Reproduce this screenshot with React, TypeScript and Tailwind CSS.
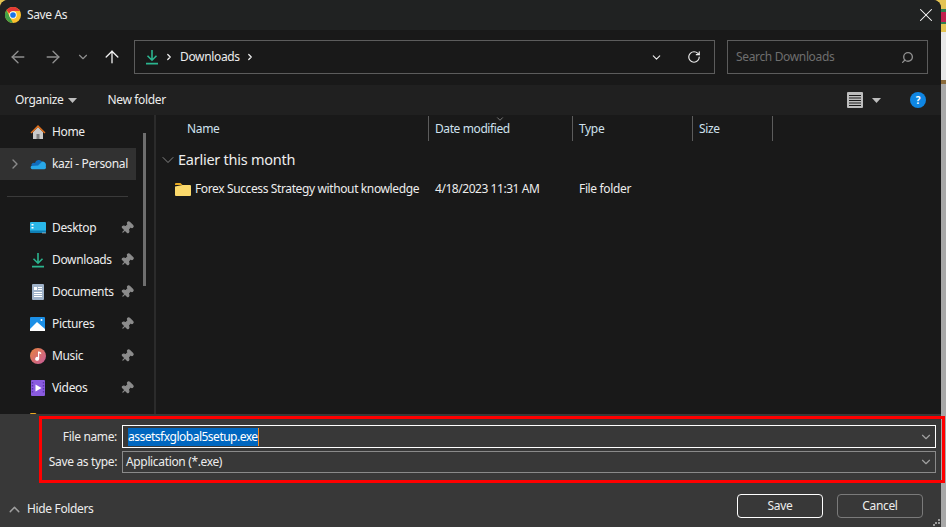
import { ArrowLeft, ArrowRight, ArrowUp, ChevronDown, ChevronRight, ChevronUp, Pin, RotateCw, Search, X } from "lucide-react";

const DownloadIcon = ({ size = 16 }: { size?: number }) => (
  <svg width={size} height={size} viewBox="0 0 16 16" fill="none" stroke="#2bb58f" strokeWidth="1.6">
    <path d="M8 1v10M3.5 6.8 8 11.2l4.500-4.400M2 14.600h12" />
  </svg>
);

const ChromeIcon = () => (
  <svg width="16" height="16" viewBox="0 0 48 48">
    <circle cx="24" cy="24" r="24" fill="#fbc02d" />
    <path d="M24 0a24 24 0 0 1 20.800 12H24a12 12 0 0 0-11.200 7.600L4.600 9.800A24 24 0 0 1 24 0z" fill="#e53935" />
    <path d="M4.600 9.800 14.600 30 24 48A24 24 0 0 1 4.600 9.800z" fill="#43a047" />
    <circle cx="24" cy="24" r="11" fill="#fff" />
    <circle cx="24" cy="24" r="8.500" fill="#1a73e8" />
  </svg>
);

const HomeIcon = () => (
  <svg width="16" height="16" viewBox="0 0 16 16">
    <path d="M3 8v7h10V8L8 3z" fill="#c9c9c9" />
    <path d="M6.500 10h3v5h-3z" fill="#7d7d7d" />
    <path d="M.5 8.500 8 1l7.500 7.500-1 1L8 3.300 1.500 9.500z" fill="#e2711d" />
  </svg>
);

const CloudIcon = () => (
  <svg width="16" height="12" viewBox="0 0 16 11">
    <path d="M5 4.500a4 4 0 0 1 7-1.500l-4 4.500H1.500A2.500 2.500 0 0 1 5 4.500z" fill="#0f6cbd" />
    <path d="M2 10.800a2 2 0 0 1-.8-3.300L8 7l4-4a3.500 3.500 0 0 1 3.800 4.500l.2 1.700a2 2 0 0 1-2 1.600z" fill="#28a8ea" />
  </svg>
);

const DesktopIcon = () => (
  <svg width="16" height="12" viewBox="0 0 16 12">
    <rect width="16" height="10.500" rx="1" fill="#29b6e8" />
    <path d="M0 8.500h16V10a1 1 0 0 1-1 1H1a1 1 0 0 1-1-1z" fill="#0f7fb5" />
    <path d="M1.500 2h2v1.500h-2zM1.500 5h2v1.500h-2zM12.500 10.500h1v1h-1zM14.500 10.500h1v1h-1z" fill="#fff" />
  </svg>
);

const DocumentsIcon = () => (
  <svg width="12" height="16" viewBox="0 0 12 16">
    <rect width="12" height="16" rx="1" fill="#9fb2c9" />
    <path d="M2 3h3v3H2zM6 3h4v1H6zM6 5h4v1H6zM2 8h8v1H2zM2 10h8v1H2zM2 12h8v1H2z" fill="#fff" />
  </svg>
);

const PicturesIcon = () => (
  <svg width="15" height="14" viewBox="0 0 15 14">
    <rect width="15" height="14" rx="1" fill="#1b8fe6" />
    <path d="M0 12 7 5l8 7v2H0z" fill="#fff" />
    <circle cx="11.500" cy="3" r="1" fill="#fff" />
  </svg>
);

const MusicIcon = () => (
  <svg width="16" height="16" viewBox="0 0 16 16">
    <defs>
      <linearGradient id="music-grad" x1="0" y1="0" x2="1" y2="1">
        <stop offset="0" stopColor="#e8843e" />
        <stop offset="1" stopColor="#c65a9c" />
      </linearGradient>
    </defs>
    <circle cx="8" cy="8" r="8" fill="url(#music-grad)" />
    <path d="M8 3.500h1.200v7.300a2 2 0 1 1-1.200-1.800zM9.200 3.500l2 1.300v1.400l-2-1z" fill="#fff" />
  </svg>
);

const VideosIcon = () => (
  <svg width="14" height="16" viewBox="0 0 14 16">
    <rect width="14" height="16" rx="1" fill="#8a5be0" />
    <path d="M4.500 4.500 10.500 8l-6 3.500z" fill="#fff" />
    <path d="M.8 2h1.400v1.400H.8zM.8 5h1.400v1.400H.8zM.8 8h1.400v1.400H.8zM.8 11h1.400v1.400H.8zM11.800 2h1.400v1.400h-1.400zM11.800 5h1.400v1.400h-1.400zM11.800 8h1.400v1.400h-1.400zM11.800 11h1.400v1.400h-1.400z" fill="#5d34ad" />
  </svg>
);

const FolderIcon = ({ size = 16 }: { size?: number }) => (
  <svg width={size} height={size * 0.8125} viewBox="0 0 16 13">
    <path d="M0 1a1 1 0 0 1 1-1h4.500l2 2H0z" fill="#e9a920" />
    <path d="M0 3.500 7.500 2H15a1 1 0 0 1 1 1v9a1 1 0 0 1-1 1H1a1 1 0 0 1-1-1z" fill="#fbd96b" />
  </svg>
);

const ListViewIcon = () => (
  <svg width="16" height="16" viewBox="0 0 16 16">
    <rect width="16" height="16" rx="1" fill="#bdbdbd" />
    <path d="M2 3h12v1H2zM2 5.500h12v1H2zM2 8h12v1H2zM2 10.500h12v1H2zM2 13h12v1H2z" fill="#1a1a1a" />
  </svg>
);

const Caret = () => (
  <svg width="9" height="5" viewBox="0 0 9 5">
    <path d="M0 0h9L4.500 5z" fill="#bdbdbd" />
  </svg>
);

const SideItem = ({ icon, label, selected, pinned, chevron }: { icon: React.ReactNode; label: string; selected?: boolean; pinned?: boolean; chevron?: boolean }) => (
  <div className={`flex h-8 w-[136px] shrink-0 items-center ${selected ? "bg-[#313131]" : ""}`}>
    <span className="flex w-[27px] justify-center pl-[3px]">
      {chevron && <ChevronRight size={16} className="text-[#8a8a8a]" />}
    </span>
    <span className="flex w-[25px] justify-center pr-[4px]">{icon}</span>
    <span className="flex-1 whitespace-nowrap">{label}</span>
    {pinned && <Pin size={14} className="mr-[2px] rotate-45 fill-[#8c8c8c] text-[#8c8c8c]" />}
  </div>
);

export default function App() {
  return (
    <div className="relative flex h-[527px] w-[946px] overflow-hidden bg-[#e3c352] font-['Noto_Sans',sans-serif] text-[12px] tracking-[-0.35px] text-[#ededed]">
      <div className="relative flex w-[941px] flex-col overflow-hidden rounded-t-[8px] bg-[#191919]">
        {/* title bar */}
        <div className="flex h-[30px] shrink-0 items-center bg-[#202222] pl-[5px]">
          <ChromeIcon />
          <span className="ml-[6px]">Save As</span>
          <X size={22} strokeWidth={1.1} className="ml-auto mr-[4px] text-white" />
        </div>

        {/* nav row */}
        <div className="flex h-[55px] shrink-0 items-start pt-[10px]">
          <div className="flex h-[34px] w-[134px] items-center text-[#8f8f8f]">
            <ArrowLeft size={20} strokeWidth={1.6} className="ml-[8px]" />
            <ArrowRight size={20} strokeWidth={1.6} className="ml-[15px]" />
            <ChevronDown size={14} className="ml-[13px]" />
            <ArrowUp size={20} strokeWidth={1.6} className="ml-[12px] text-[#ededed]" />
          </div>
          <div className="flex h-[34px] w-[581px] items-center border border-[#5c5c5c] pl-[9px]">
            <DownloadIcon />
            <ChevronRight size={10} strokeWidth={3} className="ml-[4px]" />
            <span className="ml-[6px]">Downloads</span>
            <ChevronRight size={10} strokeWidth={3} className="ml-[5px]" />
            <ChevronDown size={13} className="ml-auto" />
            <RotateCw size={14} className="ml-[24px] mr-[13px]" />
          </div>
          <div className="ml-[12px] flex h-[34px] w-[201px] items-center border border-[#5c5c5c] pl-[8px] text-[#6e6e6e]">
            <span>Search Downloads</span>
            <Search size={13} strokeWidth={2.5} className="ml-auto mr-[13px] -scale-x-100 text-[#8f8f8f]" />
          </div>
        </div>

        {/* toolbar */}
        <div className="flex h-[30px] shrink-0 items-center bg-[#202020] pl-[15px]">
          <span>Organize</span>
          <span className="ml-[5px]"><Caret /></span>
          <span className="ml-[30px]">New folder</span>
          <span className="ml-auto"><ListViewIcon /></span>
          <span className="ml-[9px]"><Caret /></span>
          <span className="ml-[29px] mr-[15px] flex h-4 w-4 items-center justify-center rounded-full bg-[#0f86e3] text-[10px] font-bold text-white">?</span>
        </div>

        <div className="flex min-h-0 flex-1">
          {/* sidebar */}
          <div className="relative flex h-[299px] w-[154px] shrink-0 flex-col overflow-hidden pt-[1px]">
            <SideItem icon={<HomeIcon />} label="Home" />
            <SideItem icon={<CloudIcon />} label="kazi - Personal" selected chevron />
            <div className="flex h-8 w-[136px] shrink-0 items-center pl-[7px] pr-[8px]">
              <div className="h-px w-full bg-[#3a3a3a]" />
            </div>
            <SideItem icon={<DesktopIcon />} label="Desktop" pinned />
            <SideItem icon={<DownloadIcon />} label="Downloads" pinned />
            <SideItem icon={<DocumentsIcon />} label="Documents" pinned />
            <SideItem icon={<PicturesIcon />} label="Pictures" pinned />
            <SideItem icon={<MusicIcon />} label="Music" pinned />
            <SideItem icon={<VideosIcon />} label="Videos" pinned />
            <SideItem icon={<span className="block -translate-y-[1px]"><FolderIcon /></span>} label="" />
            <div className="absolute left-[143px] top-[18px] h-[153px] w-[3px] bg-[#6e6e6e]" />
          </div>
          <div className="w-[2px] shrink-0 bg-[#2b2b2b]" />

          {/* file list */}
          <div className="flex-1 pt-[1px]">
            <div className="flex h-[25px] text-[#cfe1ee]">
              <div className="flex w-[273px] items-center border-r border-[#5c5c5c] pl-[31px]">Name</div>
              <div className="relative flex w-[144px] items-center border-r border-[#5c5c5c] pl-[6px] tracking-[-0.4px]">
                Date modified
                <ChevronUp size={10} className="absolute left-[66px] top-[-2px] rotate-180 text-[#8a8a8a]" />
              </div>
              <div className="flex w-[120px] items-center border-r border-[#5c5c5c] pl-[6px]">Type</div>
              <div className="flex w-[80px] items-center border-r border-[#5c5c5c] pl-[6px]">Size</div>
            </div>
            <div className="mt-[7px] flex h-[24px] items-center pl-[2px] text-[14.500px] tracking-[-0.25px]">
              <ChevronDown size={20} strokeWidth={1} className="text-[#9a9a9a]" />
              <span>Earlier this month</span>
            </div>
            <div className="mt-[6px] flex h-[22px] items-center">
              <div className="flex w-[273px] items-center pl-[19px]">
                <FolderIcon />
                <span className="ml-[4px] whitespace-nowrap tracking-[-0.38px]">Forex Success Strategy without knowledge</span>
              </div>
              <div className="w-[144px] pl-[6px] tracking-[-0.45px]">4/18/2023 11:31 AM</div>
              <div className="pl-[6px]">File folder</div>
            </div>
          </div>
        </div>

        {/* bottom panel */}
        <div className="flex h-[113px] shrink-0 flex-col bg-[#383838] pr-[5px] pt-[11px]">
          <div className="flex h-[23px] items-center">
            <span className="w-[117px] text-right">File name:</span>
            <div className="ml-[5px] flex h-[23px] flex-1 items-center border border-white pl-[5px]">
              <span className="border-r border-[#f58a1f] bg-[#0067c0] tracking-[-0.5px] text-white">assetsfxglobal5setup.exe</span>
              <ChevronDown size={14} className="ml-auto mr-[2px] text-[#a0a0a0]" />
            </div>
          </div>
          <div className="mt-[3px] flex h-[22px] items-center">
            <span className="w-[117px] text-right">Save as type:</span>
            <div className="ml-[5px] flex h-[22px] flex-1 items-center border border-[#8a8a8a] pl-[3px]">
              <span>Application (*.exe)</span>
              <ChevronDown size={14} className="ml-auto mr-[2px] text-[#a0a0a0]" />
            </div>
          </div>
          <div className="mt-[21px] flex items-center pl-[6px] pr-[13px]">
            <ChevronUp size={17} strokeWidth={2} className="translate-y-[3px] text-[#a0a0a0]" />
            <span className="ml-[4px] translate-y-[3px]">Hide Folders</span>
            <button className="ml-auto h-[24px] w-[86px] rounded-[4px] border border-white">Save</button>
            <button className="ml-[14px] h-[24px] w-[86px] rounded-[4px] border border-[#7a7a7a]">Cancel</button>
          </div>
        </div>

        {/* resize grip */}
        <svg className="absolute bottom-[1px] right-[1px]" width="7" height="7" viewBox="0 0 7 7">
          <path d="M5 0h2v2H5zM2 3h2v2H2zM5 3h2v2H5zM0 5h2v2H0z" fill="#9a9a9a" />
        </svg>
      </div>

      {/* sliver of the page behind the dialog */}
      <div className="flex h-full w-[5px] flex-col">
        <div className="h-[9px] bg-[#e3c352]" />
        <div className="h-[3px] bg-[#2f7d4f]" />
        <div className="h-[10px] bg-[#c2204f]" />
        <div className="h-[2px] bg-[#2f7d4f]" />
        <div className="h-[8px] bg-[#e3c352]" />
        <div className="h-[48px] bg-[#e8e8e8]" />
        <div className="h-[4px] bg-[#8a6a3a]" />
        <div className="flex-1 bg-[#a8a8a8]" />
      </div>

      {/* annotation drawn over the screenshot */}
      <div className="pointer-events-none absolute left-[39px] top-[416px] h-[67px] w-[906px] border-[3px] border-[#ff0000]" />
    </div>
  );
}
